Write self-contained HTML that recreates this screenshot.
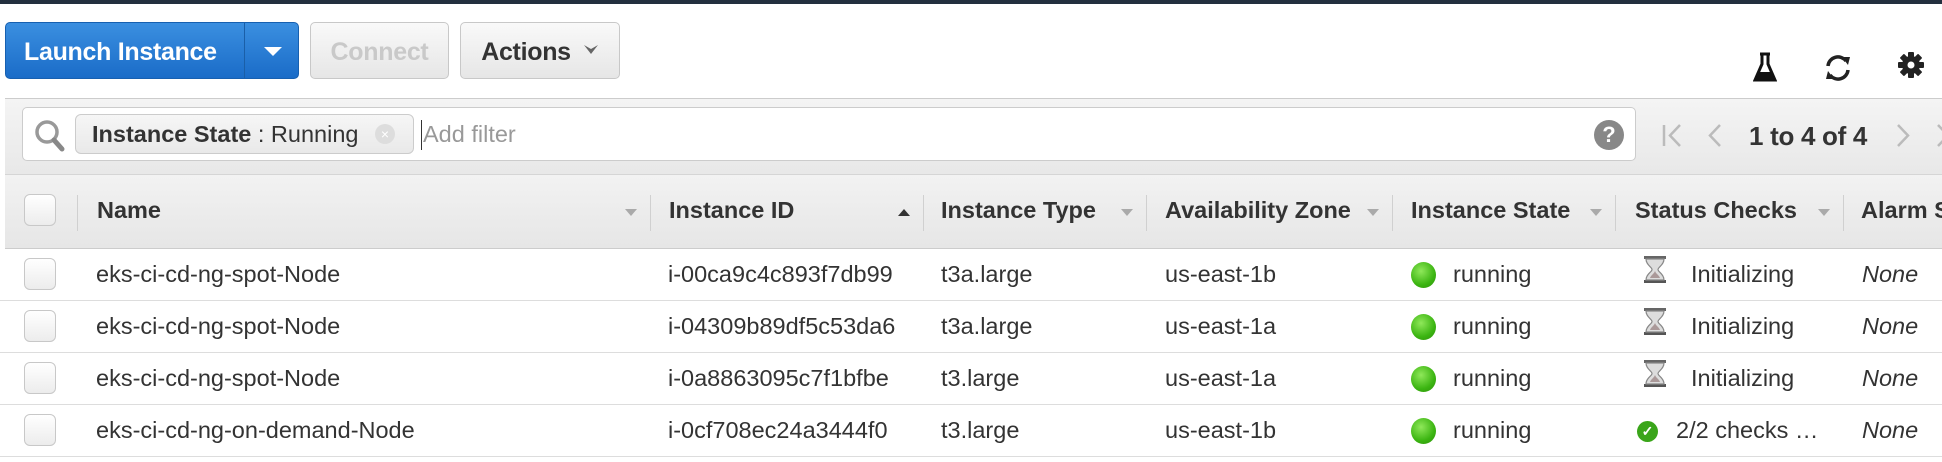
<!DOCTYPE html>
<html><head><meta charset="utf-8"><style>
*{box-sizing:border-box;margin:0;padding:0}
body{width:1942px;height:462px;overflow:hidden;background:#fff;font-family:"Liberation Sans",Arial,sans-serif;color:#333;position:relative}
.a{position:absolute}
.btn{position:absolute;top:22px;height:57px;border-radius:5px;font-weight:bold;font-size:25px;display:flex;align-items:center;justify-content:center;letter-spacing:-0.3px;padding-top:4px}
.gray{background:linear-gradient(#f9f9f9,#e6e6e6);border:1px solid #c8c8c8}
.hdr{position:absolute;top:197px;font-weight:bold;font-size:23.5px;color:#333;white-space:nowrap}
.sep{position:absolute;top:195px;width:1px;height:36px;background:#d0d0d0}
.tri{position:absolute;top:209px;width:0;height:0;border-left:6px solid transparent;border-right:6px solid transparent;border-top:7px solid #aaa}
.row{position:absolute;left:0;width:1942px;height:52px;border-bottom:1px solid #ddd;font-size:23.5px}
.row span{position:absolute;top:12px;white-space:nowrap}
.cb{position:absolute;left:24px;top:9px;width:32px;height:32px;border:1px solid #c8c8c8;border-radius:6px;background:linear-gradient(#fff,#ececec)}
.dot{position:absolute;left:1411px;top:13px;width:25px;height:26px;border-radius:50%;background:radial-gradient(circle at 40% 35%,#8fe85a,#3cb512 60%,#2a8f08)}
.hg{position:absolute;left:1643px;top:7px}
</style></head><body>
<div class="a" style="left:0;top:0;width:1942px;height:4px;background:#232f3e"></div>
<div class="btn" style="left:5px;width:294px;background:linear-gradient(#3b8fe0,#1a6cc8);border:1px solid #1760b0;color:#fff;justify-content:flex-start">
<span style="padding-left:18px;width:238px">Launch Instance</span>
<span style="position:absolute;left:238px;top:0;width:1px;height:55px;background:#1a5fa8"></span>
<span style="position:absolute;left:258px;top:24px;border-left:9px solid transparent;border-right:9px solid transparent;border-top:9px solid #fff"></span>
</div>
<div class="btn gray" style="left:310px;width:139px;color:#c9c9c9">Connect</div>
<div class="btn gray" style="left:460px;width:160px;color:#333">Actions <svg style="margin-left:12px;margin-bottom:6px" width="16" height="12" viewBox="0 0 16 12"><path d="M1 1l7 9 7-9-7 4z" fill="#666"/></svg></div>
<svg class="a" style="left:1753px;top:52px" width="24" height="32" viewBox="0 0 24 32"><path d="M7 2h10M9 2v10L2 28h20L15 12V2" fill="none" stroke="#111" stroke-width="3"/><path d="M5 20h14l3 8H2z" fill="#111"/></svg>
<svg class="a" style="left:1822px;top:52px" width="32" height="32" viewBox="0 0 32 32"><path d="M6 14a10 10 0 0 1 18-5" fill="none" stroke="#222" stroke-width="3.5"/><path d="M20 5l8 0-2 8z" fill="#222"/><path d="M26 18a10 10 0 0 1-18 5" fill="none" stroke="#222" stroke-width="3.5"/><path d="M12 27l-8 0 2-8z" fill="#222"/></svg>
<svg class="a" style="left:1897px;top:51px" width="28" height="28" viewBox="0 0 28 28"><g fill="#222"><circle cx="14" cy="14" r="9"/><rect x="11" y="1" width="6" height="26" rx="1"/><rect x="1" y="11" width="26" height="6" rx="1"/><rect x="11" y="1" width="6" height="26" rx="1" transform="rotate(45 14 14)"/><rect x="11" y="1" width="6" height="26" rx="1" transform="rotate(-45 14 14)"/></g><circle cx="14" cy="14" r="3.5" fill="#fff"/></svg>
<div class="a" style="left:5px;top:98px;width:1937px;height:76px;background:linear-gradient(#f4f4f4,#e8e8e8);border-top:1px solid #ccc"></div>
<div class="a" style="left:22px;top:107px;width:1614px;height:54px;background:#fff;border:1px solid #ccc;border-radius:5px"></div>
<svg class="a" style="left:33px;top:118px" width="34" height="36" viewBox="0 0 34 36"><circle cx="14" cy="14" r="10" fill="none" stroke="#999" stroke-width="3.5"/><path d="M21 22l8 9" stroke="#888" stroke-width="5" stroke-linecap="round"/></svg>
<div class="a" style="left:75px;top:114px;width:339px;height:40px;background:linear-gradient(#f6f6f6,#e9e9e9);border:1px solid #ccc;border-radius:6px;font-size:23.5px;line-height:38px;padding-left:16px;white-space:nowrap"><b>Instance State</b> : Running<span style="position:absolute;left:299px;top:9px;width:20px;height:20px;border-radius:50%;background:#ddd;color:#fff;font-size:14px;line-height:20px;text-align:center">×</span></div>
<div class="a" style="left:421px;top:120px;width:1px;height:30px;background:#333"></div>
<div class="a" style="left:423px;top:121px;font-size:23.5px;color:#999">Add filter</div>
<div class="a" style="left:1594px;top:120px;width:30px;height:30px;border-radius:50%;background:#888;color:#fff;font-weight:bold;font-size:22px;text-align:center;line-height:30px">?</div>
<svg class="a" style="left:1660px;top:123px" width="282" height="26" viewBox="0 0 282 26"><g fill="none" stroke="#bbb" stroke-width="2.5"><path d="M4 2v21M20 2l-10 10.5 10 10.5"/><path d="M60 2l-10 10.5 10 10.5"/><path d="M238 2l10 10.5-10 10.5"/><path d="M278 2l10 10.5-10 10.5"/></g></svg>
<div class="a" style="left:1749px;top:121px;font-size:26px;font-weight:bold;color:#333;letter-spacing:-0.3px">1 to 4 of 4</div>
<div class="a" style="left:5px;top:174px;width:1937px;height:75px;background:linear-gradient(#f2f2f2,#e6e6e6);border-top:1px solid #d5d5d5;border-bottom:1px solid #ccc"></div>
<div class="a" style="left:24px;top:194px;width:32px;height:32px;border:1px solid #c8c8c8;border-radius:6px;background:linear-gradient(#fff,#ececec)"></div>
<div class="sep" style="left:77px"></div><div class="hdr" style="left:97px">Name</div><div class="tri" style="left:625px"></div>
<div class="sep" style="left:650px"></div><div class="hdr" style="left:669px">Instance ID</div><div class="tri" style="left:898px;border-top:none;border-bottom:7px solid #333"></div>
<div class="sep" style="left:923px"></div><div class="hdr" style="left:941px">Instance Type</div><div class="tri" style="left:1121px"></div>
<div class="sep" style="left:1146px"></div><div class="hdr" style="left:1165px">Availability Zone</div><div class="tri" style="left:1367px"></div>
<div class="sep" style="left:1392px"></div><div class="hdr" style="left:1411px">Instance State</div><div class="tri" style="left:1590px"></div>
<div class="sep" style="left:1615px"></div><div class="hdr" style="left:1635px">Status Checks</div><div class="tri" style="left:1818px"></div>
<div class="sep" style="left:1843px"></div><div class="hdr" style="left:1861px">Alarm Status</div>
<div class="row" style="top:249px"><div class="cb"></div><span style="left:96px">eks-ci-cd-ng-spot-Node</span><span style="left:668px">i-00ca9c4c893f7db99</span><span style="left:941px">t3a.large</span><span style="left:1165px">us-east-1b</span><div class="dot"></div><span style="left:1453px">running</span><svg class="hg" width="24" height="28" viewBox="0 0 24 28"><rect x="1" y="0" width="22" height="3" fill="#666"/><rect x="1" y="24" width="22" height="3" fill="#555"/><path d="M3 3h18c0 6-6 8-6 10.5s6 4.5 6 10.5H3c0-6 6-8 6-10.5S3 9 3 3z" fill="#ddd" stroke="#888" stroke-width="1.2"/><path d="M7 22c1-3 4-4 5-7 1 3 4 4 5 7z" fill="#a99"/></svg><span style="left:1691px">Initializing</span><span style="left:1862px;font-style:italic">None</span></div>
<div class="row" style="top:301px"><div class="cb"></div><span style="left:96px">eks-ci-cd-ng-spot-Node</span><span style="left:668px">i-04309b89df5c53da6</span><span style="left:941px">t3a.large</span><span style="left:1165px">us-east-1a</span><div class="dot"></div><span style="left:1453px">running</span><svg class="hg" width="24" height="28" viewBox="0 0 24 28"><rect x="1" y="0" width="22" height="3" fill="#666"/><rect x="1" y="24" width="22" height="3" fill="#555"/><path d="M3 3h18c0 6-6 8-6 10.5s6 4.5 6 10.5H3c0-6 6-8 6-10.5S3 9 3 3z" fill="#ddd" stroke="#888" stroke-width="1.2"/><path d="M7 22c1-3 4-4 5-7 1 3 4 4 5 7z" fill="#a99"/></svg><span style="left:1691px">Initializing</span><span style="left:1862px;font-style:italic">None</span></div>
<div class="row" style="top:353px"><div class="cb"></div><span style="left:96px">eks-ci-cd-ng-spot-Node</span><span style="left:668px">i-0a8863095c7f1bfbe</span><span style="left:941px">t3.large</span><span style="left:1165px">us-east-1a</span><div class="dot"></div><span style="left:1453px">running</span><svg class="hg" width="24" height="28" viewBox="0 0 24 28"><rect x="1" y="0" width="22" height="3" fill="#666"/><rect x="1" y="24" width="22" height="3" fill="#555"/><path d="M3 3h18c0 6-6 8-6 10.5s6 4.5 6 10.5H3c0-6 6-8 6-10.5S3 9 3 3z" fill="#ddd" stroke="#888" stroke-width="1.2"/><path d="M7 22c1-3 4-4 5-7 1 3 4 4 5 7z" fill="#a99"/></svg><span style="left:1691px">Initializing</span><span style="left:1862px;font-style:italic">None</span></div>
<div class="row" style="top:405px"><div class="cb"></div><span style="left:96px">eks-ci-cd-ng-on-demand-Node</span><span style="left:668px">i-0cf708ec24a3444f0</span><span style="left:941px">t3.large</span><span style="left:1165px">us-east-1b</span><div class="dot"></div><span style="left:1453px">running</span><div style="position:absolute;left:1637px;top:16px;width:21px;height:21px;border-radius:50%;background:#3aa51a;color:#fff;font-size:14px;font-weight:bold;text-align:center;line-height:21px">✓</div><span style="left:1676px">2/2 checks …</span><span style="left:1862px;font-style:italic">None</span></div>
</body></html>
